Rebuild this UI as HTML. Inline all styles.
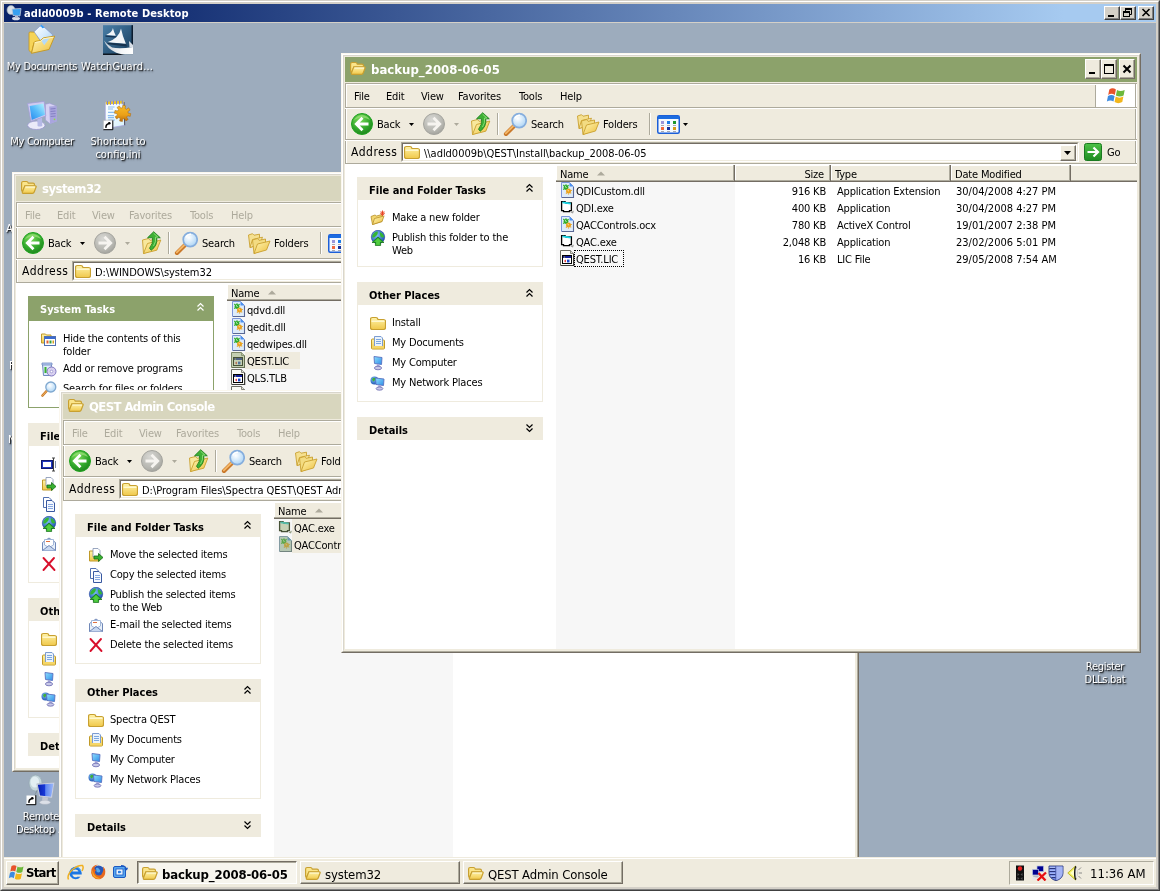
<!DOCTYPE html>
<html><head><meta charset="utf-8"><title>adld0009b - Remote Desktop</title>
<style>
html,body{margin:0;padding:0;background:#D4D0C8;}
body{width:1160px;height:891px;overflow:hidden;position:relative;font:11px "DejaVu Sans Condensed","Liberation Sans",sans-serif;color:#000;letter-spacing:-0.18px;}
*{box-sizing:border-box;}
.a{position:absolute;}
svg{display:block;overflow:visible;}
#rdp{position:absolute;left:0;top:0;width:1160px;height:891px;background:#D4D0C8;will-change:transform;}
#rdp .e1{position:absolute;left:0;top:0;right:0;bottom:0;border:1px solid;border-color:#D4D0C8 #404040 #404040 #D4D0C8;}
#rdp .e2{position:absolute;left:1px;top:1px;right:1px;bottom:1px;border:1px solid;border-color:#fff #808080 #808080 #fff;}
#otb{position:absolute;left:4px;top:4px;width:1152px;height:18px;background:linear-gradient(90deg,#0A246A 0%,#0A246A 8%,#A6CAF0 92%,#A6CAF0 100%);color:#fff;font-weight:bold;font-size:11px;line-height:19px;letter-spacing:0.09px;font-family:"DejaVu Sans Condensed","Liberation Sans",sans-serif;}
.ob{position:absolute;top:2px;width:16px;height:14px;background:#D4D0C8;border:1px solid;border-color:#fff #404040 #404040 #fff;box-shadow:inset -1px -1px 0 #808080;}
#desk{position:absolute;left:4px;top:23px;width:1152px;height:864px;overflow:hidden;background:#9DACBD;}
.dl{position:absolute;color:#fff;text-align:center;font-size:11px;line-height:13px;letter-spacing:-0.3px;text-shadow:1px 1px 1px rgba(0,0,0,0.85),1px 2px 2px rgba(0,0,0,0.45);white-space:nowrap;}
.win{position:absolute;width:800px;height:600px;background:#EFEBDE;border:1px solid;border-color:#FBF7EE #736D63 #736D63 #FBF7EE;overflow:hidden;}
.win .in{position:absolute;left:0;top:0;width:798px;height:598px;border:1px solid;border-color:#fff #ADAA9C #ADAA9C #fff;}
.win .in2{position:absolute;left:1px;top:1px;width:796px;height:596px;border:1px solid #D9D6CC;border-right-color:#EFEBDE;border-bottom-color:#EFEBDE;}
/* children positioned relative to .w0 which is at window (0,0) */
.w0{position:absolute;left:-1px;top:-1px;width:800px;height:600px;}
.tb{position:absolute;left:4px;top:4px;width:792px;height:25px;color:#fff;font-weight:bold;font-size:13px;line-height:25px;white-space:nowrap;}
.tb.act{background:#8CA26B;} .tb.ina{background:#D8D6BE;color:#fff;}
.tb span{position:absolute;left:26px;top:0;}
.cb{position:absolute;top:2px;width:16px;height:20px;background:#EFEBDE;border:1px solid;border-color:#fff #736D63 #736D63 #fff;box-shadow:inset -1px -1px 0 #ADAA9C;}
.hl{position:absolute;left:4px;width:792px;height:2px;border-top:1px solid #ADAA9C;border-bottom:1px solid #fff;}
.menu{position:absolute;left:4px;top:32px;width:792px;height:22px;line-height:22px;font-size:11px;white-space:nowrap;}
.menu span{position:absolute;top:1px;}
.ina-m span{color:#ADAA9C;}
.tool{position:absolute;left:4px;top:56px;width:792px;height:30px;line-height:30px;white-space:nowrap;}
.tool span{position:absolute;top:1px;}
.vsep{position:absolute;top:4px;width:2px;height:22px;border-left:1px solid #ADAA9C;border-right:1px solid #fff;}
.addr{position:absolute;left:4px;top:88px;width:792px;height:22px;line-height:22px;white-space:nowrap;}
.albl{position:absolute;left:6px;top:0px;font-size:12px;letter-spacing:0.5px;}
.abox{position:absolute;left:56px;top:1px;height:20px;background:#fff;border:1px solid;border-color:#ADAA9C #fff #fff #ADAA9C;}
.abox i{position:absolute;left:0;top:0;right:0;bottom:0;border:1px solid;border-color:#736D63 #EFEBDE #EFEBDE #736D63;}
.abox span{position:absolute;left:22px;top:1px;line-height:19px;letter-spacing:-0.03px}
.dd{position:absolute;right:2px;top:2px;width:16px;height:16px;background:#EFEBDE;border:1px solid;border-color:#fff #736D63 #736D63 #fff;box-shadow:inset -1px -1px 0 #ADAA9C;}
.cont{position:absolute;left:4px;top:111px;width:792px;height:485px;background:#fff;overflow:hidden;}
.th{position:absolute;left:12px;width:186px;height:23px;background:#EFEBDE;font-weight:bold;font-size:11px;line-height:28px;padding-left:12px;white-space:nowrap;letter-spacing:0px;overflow:hidden}
.th.pri{background:#8CA26B;color:#fff;height:25px;line-height:28px}
.tbody{position:absolute;left:12px;width:186px;border:1px solid #EFEBDE;border-top:none;background:#fff;}
.tbody.pri{border-color:#8CA26B;}
.ti{position:absolute;left:34px;white-space:nowrap;line-height:13px;}
.tic{position:absolute;left:12px;width:16px;height:16px;}
.chev{position:absolute;right:10px;top:7px;}
.lh{position:absolute;top:1px;height:17px;background:#EFEBDE;border-right:1px solid #736D63;border-bottom:1px solid #736D63;box-shadow:inset -1px -1px 0 #ADAA9C,inset 1px 1px 0 #fff;line-height:19px;padding-left:4px;white-space:nowrap;overflow:hidden}
.row{position:absolute;left:211px;height:17px;line-height:20px;white-space:nowrap;}
.row span{position:absolute;top:0;}
.row svg{position:absolute;left:6px;top:0px;}
.sorted{position:absolute;left:211px;top:18px;width:179px;bottom:0;background:#F7F7F7;}
#task{position:absolute;left:0;top:834px;width:1152px;height:30px;background:#EFEBDE;border-top:1px solid #EFEBDE;box-shadow:inset 0 1px 0 #fff;font-size:13px;z-index:50;}
.tkb{position:absolute;top:3px;height:23px;background:#EFEBDE;border:1px solid;border-color:#fff #736D63 #736D63 #fff;box-shadow:inset -1px -1px 0 #ADAA9C;line-height:20px;white-space:nowrap;}
.tkb.on{background:#F7F5EE;border-color:#736D63 #fff #fff #736D63;box-shadow:inset 1px 1px 0 #ADAA9C;font-weight:bold;}
.tkb span{position:absolute;left:24px;top:3px;letter-spacing:-0.15px}
.tkb svg{position:absolute;left:4px;top:3px;}
#tray{position:absolute;left:1005px;top:3px;width:145px;height:24px;border:1px solid;border-color:#ADAA9C #fff #fff #ADAA9C;}
</style></head><body>
<svg width="0" height="0" style="position:absolute;left:0;top:0"><defs>
<linearGradient id="gFold" x1="0" y1="0" x2="0" y2="1"><stop offset="0" stop-color="#FFF3A8"/><stop offset="1" stop-color="#F0C84A"/></linearGradient>
<linearGradient id="gFoldB" x1="0" y1="0" x2="1" y2="1"><stop offset="0" stop-color="#FFF7B8"/><stop offset="1" stop-color="#EDBE3C"/></linearGradient>
<radialGradient id="gBack" cx="0.4" cy="0.3" r="0.8"><stop offset="0" stop-color="#7CDB5A"/><stop offset="0.6" stop-color="#2FA52A"/><stop offset="1" stop-color="#1B7A1B"/></radialGradient>
<radialGradient id="gFwd" cx="0.4" cy="0.3" r="0.8"><stop offset="0" stop-color="#D8D8D4"/><stop offset="0.7" stop-color="#B4B4AE"/><stop offset="1" stop-color="#9A9A94"/></radialGradient>
<radialGradient id="gLens" cx="0.4" cy="0.35" r="0.7"><stop offset="0" stop-color="#FFFFFF"/><stop offset="1" stop-color="#A9D3F5"/></radialGradient>
<linearGradient id="gGo" x1="0" y1="0" x2="0" y2="1"><stop offset="0" stop-color="#4DC247"/><stop offset="1" stop-color="#1E8C22"/></linearGradient>
<linearGradient id="gMon" x1="0" y1="0" x2="1" y2="1"><stop offset="0" stop-color="#8FE0FF"/><stop offset="1" stop-color="#2E8CE6"/></linearGradient>
<linearGradient id="gWg" x1="0" y1="0" x2="1" y2="1"><stop offset="0" stop-color="#4A7FA8"/><stop offset="1" stop-color="#163C5C"/></linearGradient>
<radialGradient id="gGlobe" cx="0.4" cy="0.35" r="0.7"><stop offset="0" stop-color="#7EC0F5"/><stop offset="1" stop-color="#1A4FB0"/></radialGradient>

<linearGradient id="gPaper" x1="0" y1="0" x2="1" y2="1"><stop offset="0" stop-color="#FFFFFF"/><stop offset="0.5" stop-color="#D8ECFC"/><stop offset="1" stop-color="#9CCBF6"/></linearGradient>
<linearGradient id="gHull" x1="0" y1="0" x2="1" y2="0"><stop offset="0" stop-color="#C4CCD6"/><stop offset="0.6" stop-color="#F4F6F8"/><stop offset="1" stop-color="#FFFFFF"/></linearGradient>
<linearGradient id="gMon2" x1="1" y1="0" x2="0" y2="1"><stop offset="0" stop-color="#B8F6FF"/><stop offset="0.5" stop-color="#58BCFA"/><stop offset="1" stop-color="#2588EE"/></linearGradient>
<linearGradient id="gPage" x1="0" y1="0" x2="1" y2="1"><stop offset="0" stop-color="#FFFFFF"/><stop offset="1" stop-color="#D8F2FC"/></linearGradient>
<linearGradient id="gGear" x1="0" y1="0" x2="0" y2="1"><stop offset="0" stop-color="#F8BC28"/><stop offset="0.6" stop-color="#EBA018"/><stop offset="1" stop-color="#B86C10"/></linearGradient>
<linearGradient id="gRdp" x1="0" y1="0" x2="1" y2="0"><stop offset="0" stop-color="#0820B0"/><stop offset="0.45" stop-color="#1838D8"/><stop offset="0.5" stop-color="#5C84F0"/><stop offset="1" stop-color="#9CB8F8"/></linearGradient>
<filter id="tint" x="0" y="0" width="1" height="1" color-interpolation-filters="sRGB"><feFlood flood-color="#8CA26B" result="f"/><feComposite in="f" in2="SourceAlpha" operator="in" result="sil"/><feComposite in="SourceGraphic" in2="sil" operator="arithmetic" k1="0" k2="0.5" k3="0.5" k4="0"/></filter>
<symbol id="fold" viewBox="0 0 16 16"><path d="M0.5 4.500 Q0.5 2.500 2.500 2.500 H6 Q7.500 2.500 8 4.500 H13.500 Q15.500 4.500 15.500 6.500 V12.500 Q15.500 14.500 13.500 14.500 H2.500 Q0.500 14.500 0.500 12.500 Z" fill="url(#gFold)" stroke="#C8A030" stroke-width="1.2"/><path d="M1.500 6.200 H14.500" stroke="#FFFCE0" stroke-width="1.2"/></symbol>
<symbol id="foldo" viewBox="0 0 16 16"><path d="M0.600 4 Q0.600 2.500 2.100 2.500 H5.500 Q6.800 2.500 7.300 4.200 H12 Q13.500 4.200 13.500 5.800 V7 H4 L1.500 12.500 Q0.600 12.500 0.600 11 Z" fill="#FBE58A" stroke="#C8A030" stroke-width="1.2"/><path d="M3.800 6.800 H14.300 Q15.600 6.800 15 8.300 L13.200 13 Q12.700 14.400 11.300 14.400 H2.200 Q0.900 14.400 1.500 12.800 Z" fill="url(#gFold)" stroke="#C8A030" stroke-width="1.2"/><path d="M4.500 8 H14" stroke="#FFFCE0" stroke-width="1"/></symbol>

<symbol id="flag" viewBox="0 0 20 18"><path d="M3 3 Q6 1 9 3 L8 8 Q5 6 2 8 Z" fill="#E8532B"/><path d="M10 3.5 Q13 5.5 17 3.5 L16 8.5 Q12.5 10.5 9 8.5 Z" fill="#6DB83A"/><path d="M1.8 9 Q5 7 7.8 9 L6.8 14 Q4 12 0.8 14 Z" fill="#3D8BE0"/><path d="M8.8 9.5 Q12 11.5 15.8 9.5 L14.8 14.5 Q11 16.5 7.8 14.5 Z" fill="#F2B61C"/></symbol>

<symbol id="back" viewBox="0 0 24 24"><circle cx="12" cy="12" r="10.500" fill="url(#gBack)" stroke="#1FA31F" stroke-width="1"/><path d="M3.500 9 Q6 3.500 12 3 Q18 3.500 20 8 Q16 5.500 12 5.500 Q7 5.500 3.500 9 Z" fill="#9BE37A" opacity="0.7"/><path d="M18.500 12 H7 M12.500 5.800 L6.300 12 L12.500 18.200" fill="none" stroke="#fff" stroke-width="2.800" stroke-linejoin="miter"/></symbol>
<symbol id="fwd" viewBox="0 0 24 24"><circle cx="12" cy="12" r="10.500" fill="url(#gFwd)" stroke="#A4A49E" stroke-width="1"/><path d="M5.500 12 H17 M11.500 5.800 L17.700 12 L11.500 18.200" fill="none" stroke="#F6F4F0" stroke-width="2.800" stroke-linejoin="miter"/></symbol>
<symbol id="up" viewBox="0 0 22 24"><path d="M2.500 9 L8.500 7.500 L10 9.300 L16.500 8 V17.500 L3.500 22.500 Z" fill="#F8E89C" stroke="#C9A030" stroke-width="0.9"/><path d="M3.500 22.500 L7.500 12.500 L20.800 9 L16.800 19.200 Z" fill="url(#gFoldB)" stroke="#C9A030" stroke-width="0.9"/><path d="M13.700 0.700 L20.300 6.800 H16.800 Q17.800 14.500 11.200 19.300 L9.500 17.200 Q13.200 13 12.600 6.800 H7.500 Z" fill="#3DB034" stroke="#157A18" stroke-width="0.8"/><path d="M13.700 2.300 L17.800 6 H15.600 Q16.200 11 13.500 15" fill="none" stroke="#8FE07A" stroke-width="0.9"/></symbol>
<symbol id="search" viewBox="0 0 24 24"><path d="M3 22 L10.800 14.300" stroke="#C9782A" stroke-width="4.200" stroke-linecap="round"/><path d="M2.800 21.400 L10.300 14" stroke="#F5B868" stroke-width="1.800" stroke-linecap="round"/><circle cx="16.200" cy="8.600" r="7" fill="url(#gLens)" stroke="#86AEDD" stroke-width="1.700"/><path d="M11.800 6.500 Q13.500 3.300 17 3.200" stroke="#fff" stroke-width="1.300" fill="none"/></symbol>
<symbol id="folders" viewBox="0 0 24 22"><path d="M1.500 3 L5.500 1.700 L7 3.200 L12.500 2.200 V12 L3 15.500 Z" fill="#F5E090" stroke="#C9A030" stroke-width="0.9"/><path d="M3 15.500 L5.500 7.500 L15.500 5.200 L12.500 12.500 Z" fill="#FBEBA8" stroke="#C9A030" stroke-width="0.9"/><path d="M5.500 8 L10.500 6.500 L12 8.300 L18.500 7 V17 L7 21.500 Z" fill="#F3DC82" stroke="#C9A030" stroke-width="0.9"/><path d="M7 21.500 L10.500 12 L23 9 L19.500 18 Z" fill="url(#gFoldB)" stroke="#C9A030" stroke-width="0.9"/></symbol>
<symbol id="views" viewBox="0 0 23 19"><rect x="0.750" y="0.750" width="21.500" height="17.500" rx="1.500" fill="#F4F9FF" stroke="#1C5FD8" stroke-width="1.500"/><rect x="1" y="1" width="21" height="3" fill="#1C6CE0"/><rect x="4" y="6" width="3" height="3" fill="#9A96D8"/><rect x="10" y="6" width="3" height="3" fill="#1C7CE8"/><rect x="16" y="6" width="3" height="3" fill="#1E962C"/><rect x="4" y="12" width="3" height="3" fill="#F0683C"/><rect x="10" y="12" width="3" height="3" fill="#14309A"/><rect x="16" y="12" width="3" height="3" fill="#D69A18"/><path d="M4 10.500 H7 M10 10.500 H13 M16 10.500 H19 M4 16.500 H7 M10 16.500 H13 M16 16.500 H19" stroke="#A8A8B0"/></symbol>
<symbol id="go" viewBox="0 0 18 18"><rect x="0.5" y="0.5" width="17" height="17" rx="2" fill="url(#gGo)" stroke="#1A7A20"/><path d="M3.5 9 H13 M9.5 4.5 L14 9 L9.5 13.5" fill="none" stroke="#fff" stroke-width="2.2"/></symbol>

<symbol id="dll" viewBox="0 0 16 16"><path d="M1.500 0.500 H9.500 L13.500 4.500 V15.500 H1.500 Z" fill="#DDEBFB" stroke="#7A94D8"/><path d="M13.500 5 V15.500 H2" fill="none" stroke="#5A6894" stroke-width="1.100"/><path d="M9.500 0.500 V4.500 H13.500 Z" fill="#4A90F0"/><circle cx="6" cy="5.500" r="2.400" fill="#2EAD2A"/><path d="M3.300 3 L4.300 4 M8.600 3.200 L7.700 4.100 M6 2.200 V3.200 M3.200 7.600 L4.200 6.800" stroke="#2EAD2A" stroke-width="1.100"/><path d="M5 4.500 L6.500 5.500" stroke="#E8F4E0" stroke-width="1"/><circle cx="8.500" cy="9" r="2.500" fill="#EBA21E"/><path d="M11.200 11.400 L10.400 10.700 M5.900 11.500 L6.700 10.800 M8.500 12.500 V11.500 M11.800 8.500 H10.800" stroke="#EBA21E" stroke-width="1.100"/><path d="M7.500 8 L9 9.200" stroke="#FBE8B0" stroke-width="0.900"/></symbol>
<symbol id="exe" viewBox="0 0 16 16"><path d="M1.600 2.600 H5 L6 4 H11.400 V11.600 H9.500 V12.600 H3.500 V11.600 H1.600 Z" fill="#fff" stroke="#000" stroke-width="1.300"/><path d="M2.500 3.400 L10.800 4.600" stroke="#18D8E8" stroke-width="1.700"/><path d="M10.500 13.500 L14 11.500 L13 14.500 Z" fill="#9C9C9C"/></symbol>
<symbol id="lic" viewBox="0 0 16 16"><path d="M0.500 0.500 H10.500 L13.500 3.500 V15.500 H0.500 Z" fill="#FBFBF6" stroke="#6C6C64"/><path d="M13.700 4 V15.700 H1" fill="none" stroke="#303030" stroke-width="1.100"/><path d="M10.500 0.500 V3.500 H13.500" fill="#E0E0D8" stroke="#6C6C64" stroke-width="0.800"/><rect x="2.500" y="5.500" width="9" height="8" fill="#fff" stroke="#000"/><rect x="3" y="6" width="8" height="2" fill="#14209A"/><path d="M4 11 L5.800 9.600 V12.400 Z" fill="#E01818"/><path d="M7 9.600 H9.500 V12.400 H7 Z" fill="#1848D0"/><circle cx="4.500" cy="7" r="0.600" fill="#F0E020"/></symbol>

<symbol id="newfold" viewBox="0 0 16 16"><path d="M1 6.5 L5 5 L6.5 6 L12 4.5 V11.5 L2.5 14.5 Z" fill="#F2D670" stroke="#B8902A" stroke-width="0.8"/><path d="M2.5 14.5 L4.5 8.5 L14 6 L12 11.5 Z" fill="url(#gFoldB)" stroke="#B8902A" stroke-width="0.8"/><path d="M12.5 0.5 V6 M10 3.2 H15 M10.8 1.3 L14.2 5.2 M14.2 1.3 L10.8 5.2" stroke="#E8401C" stroke-width="0.9"/></symbol>
<symbol id="globe" viewBox="0 0 16 16"><circle cx="8" cy="7" r="6.700" fill="url(#gGlobe)" stroke="#1C3C9A" stroke-width="0.600"/><path d="M2.500 5 Q4 1.800 7.500 1.200 Q8.500 4 6 6 Q4.500 8 2.200 7.500 Z M10 2 Q13 3 14.300 6.500 Q12.500 8.500 10.500 6.500 Q9.500 4 10 2 Z" fill="#35B535"/><path d="M8 7 L14 12.500 H10.600 V15.600 H5.400 V12.500 H2 Z" fill="#2FB026" stroke="#0E6A12" stroke-width="0.700"/><path d="M8 8.300 L11.600 11.700 H9.800 V14.800 H6.200 V11.700 H4.400 Z" fill="#52CC40"/></symbol>
<symbol id="mydocs" viewBox="0 0 16 16"><path d="M1.5 5 Q1.5 4 2.5 4 H5 L6 5 H13.5 Q14.5 5 14.5 6 V13 Q14.5 14 13.5 14 H2.5 Q1.5 14 1.5 13 Z" fill="url(#gFold)" stroke="#C09A28"/><path d="M4.5 1.5 H11 L12.5 3 V11.5 H4.5 Z" fill="#EAF3FC" stroke="#7C9CD0"/><path d="M6 4.5 H11 M6 6.5 H11 M6 8.5 H11" stroke="#7CA8E0"/><path d="M2 11 H14 V13.5 H2 Z" fill="#F5D668"/></symbol>
<symbol id="mycomp" viewBox="0 0 16 16"><path d="M4 1.5 L12 2.5 L11.5 9.5 L4.5 8.5 Z" fill="url(#gMon)" stroke="#5870C0" stroke-width="0.9"/><path d="M7 9 L9.5 9.3 L9.8 12 L6.5 11.5 Z" fill="#A8A8D8"/><ellipse cx="8" cy="13" rx="3.6" ry="1.8" fill="#C8C8E8" stroke="#6868B0" stroke-width="0.8"/></symbol>
<symbol id="netpl" viewBox="0 0 16 16"><circle cx="4.5" cy="5.5" r="4" fill="url(#gGlobe)"/><path d="M2 4 Q4 2 5.5 3.5 Q5 6 3 6.5 Z" fill="#3FAF3A"/><path d="M5.5 3 L14 4 L13.5 10.5 L6 9.5 Z" fill="url(#gMon)" stroke="#5870C0" stroke-width="0.9"/><path d="M8.5 10 L11 10.3 L11.3 12.5 L8 12 Z" fill="#A8A8D8"/><ellipse cx="9.5" cy="13.6" rx="3.4" ry="1.6" fill="#C8C8E8" stroke="#6868B0" stroke-width="0.8"/></symbol>
<symbol id="move" viewBox="0 0 16 16"><path d="M1.5 4 H5.5 L6.5 5 H11.5 V14 H1.5 Z" fill="url(#gFold)" stroke="#C09A28"/><path d="M5 1.5 H10 L12 3.5 V10 H5 Z" fill="#fff" stroke="#8090B0" stroke-width="0.8"/><path d="M6 9 H10.5 V6.5 L15 10.5 L10.5 14.5 V12 H6 Z" fill="#38B030" stroke="#146A14" stroke-width="0.8"/></symbol>
<symbol id="copy" viewBox="0 0 16 16"><path d="M2.5 1.5 H8 L10.5 4 V11.5 H2.5 Z" fill="#fff" stroke="#5070B0"/><path d="M5.5 4.5 H11 L13.5 7 V15.5 H5.5 Z" fill="#F4F8FF" stroke="#3858A0"/><path d="M7 8.5 H12 M7 10.5 H12 M7 12.5 H12" stroke="#88A8E0"/></symbol>
<symbol id="email" viewBox="0 0 16 16"><path d="M1.5 6.5 L8 2 L14.5 6.5 V14.5 H1.5 Z" fill="#E8F0FA" stroke="#7088B8"/><path d="M3.5 3.5 H12.5 V9 L8 11.5 L3.5 9 Z" fill="#fff" stroke="#90A8D0" stroke-width="0.8"/><path d="M1.5 14.5 L8 9.5 L14.5 14.5" fill="#C8D8F0" stroke="#7088B8"/><path d="M5 5.5 H9" stroke="#E07040"/></symbol>
<symbol id="del" viewBox="0 0 16 16"><path d="M2.500 2 L13.500 14 M13 2 L2.500 14" stroke="#D8102C" stroke-width="1.900" stroke-linecap="round"/></symbol>
<symbol id="hidec" viewBox="0 0 16 16"><path d="M0.5 3 H4.5 L5.5 4 H10 V12 H0.5 Z" fill="url(#gFold)" stroke="#C09A28"/><rect x="3.5" y="5.5" width="11" height="9" fill="#fff" stroke="#5070B0"/><rect x="4" y="6" width="10" height="2" fill="#3A6AD0"/><rect x="5.5" y="9.5" width="2" height="3" fill="#E06030"/><rect x="8.5" y="9.5" width="2" height="3" fill="#30A040"/><rect x="11.5" y="9.5" width="1.5" height="3" fill="#D8A020"/></symbol>
<symbol id="addrem" viewBox="0 0 16 16"><path d="M1.5 3.5 H10.5 L9.5 14.5 H2.5 Z" fill="#DCEBFA" stroke="#7088C0"/><path d="M1 2 H11 V4 H1 Z" fill="#B8CCF0" stroke="#7088C0" stroke-width="0.8"/><circle cx="10.5" cy="10.5" r="4.5" fill="#D8D0F0" stroke="#8078C0"/><circle cx="10.5" cy="10.5" r="1.3" fill="#fff" stroke="#8078C0" stroke-width="0.6"/><rect x="3.5" y="6" width="2" height="6" fill="#38B030"/></symbol>
<symbol id="search16" viewBox="0 0 16 16"><path d="M1.5 14.5 L6.5 9" stroke="#C87A28" stroke-width="2.6" stroke-linecap="round"/><path d="M1.5 14.5 L6.5 9" stroke="#F0B060" stroke-width="1" stroke-linecap="round"/><circle cx="9.8" cy="6" r="5" fill="url(#gLens)" stroke="#7FA8D0" stroke-width="1.3"/></symbol>
<symbol id="rename" viewBox="0 0 16 16"><rect x="0.5" y="4.5" width="11" height="8" fill="#2038C0" stroke="#101870"/><rect x="2" y="6" width="8" height="5" fill="#fff"/><path d="M12.5 2 V15 M11 2 H14 M11 15 H14" stroke="#404040"/><path d="M14.5 5 V12" stroke="#8090B0"/></symbol>

<symbol id="d_mydocs" viewBox="0 0 32 32"><path d="M3 9 Q3 8 4.200 8 L9 8.200 L14.500 17 L8 18.500 L5.500 28.800 L3 26.500 Z" fill="#F6D458" stroke="#C4961C" stroke-width="0.800"/><path d="M15.400 0.800 L26.900 10.900 L18.200 22 L8.100 7.700 Z" fill="url(#gPaper)" stroke="#7894D0" stroke-width="0.600"/><path d="M13.800 2.200 L15.400 0.800 L18.700 3.600 L16.300 4.300 L15.300 2.700 Z" fill="#349AF2"/><path d="M5.500 29.300 L8.100 18.500 Q8.500 17.500 10 17.300 L14.200 16.600 L17.500 13.800 L28.700 12.100 L23 25.500 Z" fill="url(#gFoldB)" stroke="#C4961C" stroke-width="0.900"/><path d="M15 16.300 L18.200 21.300 L23.700 14.100 L17.800 14.700 Z" fill="#B4DAFA"/><path d="M8.800 18.600 L14.400 17.500 L17.800 14.700 L27.500 13.200" fill="none" stroke="#FFF6C8" stroke-width="0.900"/></symbol>
<symbol id="d_wg" viewBox="0 0 32 32"><rect x="1" y="1.200" width="30" height="29.700" fill="url(#gWg)"/><path d="M29.500 1.200 H31 V23 H29.500 Z" fill="#0C1C2E"/><path d="M1 29.500 H19 L22 30.900 H1 Z" fill="#0E1620"/><path d="M10.900 4.100 Q10.300 8.800 4.100 10.900 L13.800 11.700 Q11.800 8 10.900 4.100 Z" fill="#F2F5F8"/><path d="M3.300 11.500 L14.200 12.300 L14.500 13.700 L3.500 12.700 Z" fill="#143456"/><path d="M19 4.500 Q17 14.500 5.300 18.200 L23.900 19.800 Q20.500 12 19 4.500 Z" fill="#F2F5F8"/><path d="M5.300 18.600 L24.200 20.200 L24.900 22.400 L6 20.200 Z" fill="#16324E"/><path d="M2 16.600 Q5 21 10.100 23.400 Q17 25.200 31 23 V30.500 Q20 31 14.200 28.700 Q5 25 2 16.600 Z" fill="url(#gHull)"/><path d="M27 17 L31 21 V23 L27.500 23.500 Z" fill="#D8DEE6"/></symbol>
<symbol id="d_mycomp" viewBox="0 0 32 32"><path d="M19.400 5.300 L23.500 4.200 L30.300 6.900 L30.700 22.200 L24 24.700 L19.400 21 Z" fill="#D6D2F3" stroke="#9C98D4" stroke-width="0.600"/><path d="M23.200 7.500 L30.300 6.900 L30.700 22.200 L24 24.700 Z" fill="#A9A5DE"/><path d="M24.500 10 L29.500 9.500 M24.500 12.500 L29.500 12 M24.600 15 L29.600 14.500 M24.600 17.500 L29.600 17" stroke="#8480C4" stroke-width="1.100"/><circle cx="28.500" cy="20.400" r="0.800" fill="#8CE040"/><ellipse cx="10.300" cy="26.300" rx="8.700" ry="4.200" fill="#EAEAF9" stroke="#9490CC" stroke-width="0.700"/><path d="M11.300 19.800 L16 18.600 L16.300 27 Q13.500 28 11.600 27 Z" fill="#B5B9E6"/><path d="M1.600 4.500 L18.200 2.400 L19.800 17 L4.900 22.200 Z" fill="#CFCBF0" stroke="#A09CD8" stroke-width="0.700"/><path d="M3.700 6.900 L17.400 4.500 L19 15.800 L5.700 21 Z" fill="url(#gMon2)"/></symbol>
<symbol id="d_cfg" viewBox="0 0 32 32"><path d="M3.300 3.300 L21.800 2.400 L22.600 26.300 L11.300 28.300 L3.300 28.300 Z" fill="url(#gPage)" stroke="#A8A4E0" stroke-width="0.700"/><path d="M22 3 L22.700 26.300" stroke="#50505E" stroke-width="1"/><path d="M3.800 2.800 L21.500 1.800 L21.600 4.600 L3.800 5.500 Z" fill="#E8C428"/><path d="M5.500 2 V6 M8.500 1.900 V5.900 M11.500 1.800 V5.800 M14.500 1.700 V5.700 M17.500 1.600 V5.600 M20.300 1.500 V5.400" stroke="#7C84D8" stroke-width="1"/><path d="M6 8 H12.500 M6 10 H11 M6 13.400 H12.500 M5.800 16.600 H12 M6 18.600 H12 M6.200 21 H13" stroke="#8CBCF0" stroke-width="1.100"/><path d="M28.8 14.6 L28.2 17.4 L25.7 16.8 L24.7 18.2 L26.2 20.4 L23.9 21.9 L22.5 19.7 L20.8 20.0 L20.4 22.6 L17.6 22.0 L18.2 19.5 L16.8 18.5 L14.6 20.0 L13.1 17.7 L15.3 16.3 L15.0 14.6 L12.4 14.2 L13.0 11.4 L15.5 12.0 L16.5 10.6 L15.0 8.4 L17.3 6.9 L18.7 9.1 L20.4 8.8 L20.8 6.2 L23.6 6.8 L23.0 9.3 L24.4 10.3 L26.6 8.8 L28.1 11.1 L25.9 12.5 L26.2 14.2 Z" fill="url(#gGear)" stroke="#A86410" stroke-width="0.500"/><rect x="1.500" y="21.500" width="9" height="9" fill="#fff"/><path d="M1.200 30.700 H10.800 V21.200" fill="none" stroke="#000" stroke-width="1"/><path d="M1.200 30.700 V21.200 H10.800" fill="none" stroke="#B0B0B0" stroke-width="0.600"/><path d="M4 28.800 Q3.600 25.300 7 24.600" stroke="#000" stroke-width="1.500" fill="none"/><circle cx="7.300" cy="24.300" r="1.300" fill="#000"/></symbol>
<symbol id="d_rdp" viewBox="0 0 32 32"><ellipse cx="9.500" cy="9" rx="6.500" ry="8" fill="#C4D6DC" stroke="#94A8B0" stroke-width="0.700"/><ellipse cx="8.800" cy="8" rx="4.300" ry="5.500" fill="#E2EEF2"/><path d="M11 16.500 L8.500 22" stroke="#7C8C94" stroke-width="0.800"/><path d="M10.800 9.800 L28.500 8.500 L26 24 L13 22.500 Z" fill="#D8DCE6" stroke="#A0A8B8" stroke-width="0.500"/><path d="M11.800 10.700 L27.500 9.500 L25.200 22.800 L14 21.600 Z" fill="url(#gRdp)"/><path d="M16.500 23 L22 23.500 L21.500 27 L16 26.800 Z" fill="#C4C8D2"/><ellipse cx="19" cy="28.300" rx="5.500" ry="2" fill="#DCE0E8" stroke="#B0B4C0" stroke-width="0.400"/><rect x="0.500" y="21.500" width="9" height="9" fill="#fff"/><path d="M0.200 30.700 H9.800 V21.200" fill="none" stroke="#000" stroke-width="1"/><path d="M3 28.800 Q2.600 25.300 6 24.600" stroke="#000" stroke-width="1.500" fill="none"/><circle cx="6.300" cy="24.300" r="1.300" fill="#000"/></symbol>

<symbol id="sflag" viewBox="0 0 18 18"><path d="M4.500 3 Q7 1.300 9.500 3 L8.300 8.500 Q5.800 7 3.300 8.500 Z" fill="#E8532B"/><path d="M10.500 3.500 Q13 5.200 16.500 3.500 L15.300 9 Q12.300 10.700 9.300 9 Z" fill="#6DB83A"/><path d="M3 9.700 Q5.800 8 8 9.700 L6.800 15.200 Q4.500 13.500 1.800 15.200 Z" fill="#3D8BE0"/><path d="M9 10.200 Q12 11.900 15 10.200 L13.800 15.700 Q10.800 17.400 7.800 15.700 Z" fill="#F2B61C"/></symbol>
<symbol id="ie" viewBox="0 0 17 17"><path d="M14.700 9.300 A6.200 6.200 0 1 0 13.500 12.700 H10.300 A3.300 3.300 0 0 1 5.300 10.500 H14.700 Z M5.300 7.600 A3.300 3.300 0 0 1 11.500 7.600 Z" fill="#1C76E4"/><path d="M8.500 3 A6 6 0 0 1 14 7" fill="none" stroke="#58B0F8" stroke-width="1"/><path d="M1.500 15.500 Q-0.500 11 5.500 5.500 Q11 0.800 15.500 1.500 Q17 3.500 15 7" fill="none" stroke="#F0B020" stroke-width="1.500"/></symbol>
<symbol id="ff" viewBox="0 0 16 16"><circle cx="8.500" cy="7.500" r="6" fill="#2858B8"/><path d="M6 4 Q8 3 9 5 Q11 6 10 8 Q8 9 6.500 7.500 Z" fill="#58A8E8"/><path d="M8 0.800 Q3 1 1.500 5 Q0.300 9 2.500 12.500 Q5.500 16 10.500 15 Q15.500 13 15.300 7.500 Q15 4 13 2.500 Q14 6 12.500 8.500 Q12 11 9 11.500 Q6 11.500 5 9 Q4.500 7.500 6 6 Q4 5.500 4.500 3.500 Q6 1.500 8 0.800 Z" fill="#E8681C"/><path d="M2.500 6 Q1.500 10 4 13 Q7 15.500 10.500 14.500 Q6.500 14 4.500 11 Q3 8.500 2.500 6 Z" fill="#F8A820"/></symbol>
<symbol id="ql3" viewBox="0 0 16 16"><rect x="1.500" y="2.500" width="12" height="11" rx="1.500" fill="#58A8F0" stroke="#1C58C0"/><rect x="4" y="5" width="7" height="6" fill="#E8F4FF" stroke="#1C58C0" stroke-width="0.800"/><path d="M9 1.500 Q14 1.500 14.500 6 M14.500 6 L12.500 4.500 M14.500 6 L15.500 3.800" stroke="#1C58C0" fill="none" stroke-width="1.100"/><path d="M6 7 Q8 6 9.500 8 Q8 10 6 9 Z" fill="#2C7BE0"/></symbol>
<symbol id="tr1" viewBox="0 0 16 16"><rect x="4" y="0.500" width="8" height="15" fill="#101010"/><circle cx="8" cy="3.500" r="2.200" fill="#E82020"/><path d="M5.500 8 L7.500 9.500 L5.500 11 Z M10.500 8 L8.500 9.500 L10.500 11 Z M5.500 12 L7.500 13.500 L5.500 15 Z M10.500 12 L8.500 13.500 L10.500 15 Z" fill="#505050"/></symbol>
<symbol id="tr2" viewBox="0 0 16 16"><rect x="6" y="1" width="6.500" height="5.500" fill="#000090" stroke="#B8C4E0" stroke-width="0.700"/><rect x="1.500" y="4.500" width="6" height="5.500" fill="#000090" stroke="#B8C4E0" stroke-width="0.700"/><path d="M2 10.500 H8 L7 12.500 H2.500 Z" fill="#B4B8C8"/><ellipse cx="3" cy="13.500" rx="2" ry="1.500" fill="#E4E4EC"/><path d="M7.500 8 L14.500 15.500 M15 7.500 L6.500 15.500" stroke="#E81010" stroke-width="2.300"/></symbol>
<symbol id="tr3" viewBox="0 0 16 16"><path d="M1 1 H15 V8 Q15 13.500 8 15.800 Q1 13.500 1 8 Z" fill="#6C84E4" stroke="#303C78" stroke-width="0.900"/><path d="M8 1.400 H14.600 V8 Q14.600 13 8 15.300 Z" fill="#A4B4F4"/><path d="M1.500 3.500 H7.500 M1.500 6.500 H7.500 M1.800 9.500 H7.500 M3.500 12.500 H7.500" stroke="#28347C" stroke-width="1.200"/><path d="M1.500 2.300 H7.500 M1.500 5.200 H7.500 M1.600 8.200 H7.500 M2.600 11.200 H7.500" stroke="#B8C8FC" stroke-width="1"/><path d="M7.800 1.400 V15.300" stroke="#3C4890" stroke-width="0.700"/></symbol>
<symbol id="tr4" viewBox="0 0 16 16"><path d="M0.800 8 L8.500 1 V15 Z" fill="#F4F060" stroke="#A8A400" stroke-width="0.700"/><path d="M3 8 L8 3.500 V12.500 Z" fill="#FFFFC8"/><ellipse cx="8.600" cy="8" rx="1.600" ry="7" fill="#101010"/><ellipse cx="9.300" cy="8" rx="0.900" ry="6" fill="#E8E8E8"/><path d="M11.500 5 L14 2.500 M11.800 8 H15 M11.500 11 L14 13.500" stroke="#808080" stroke-width="0.900"/></symbol>
<symbol id="rdpi" viewBox="0 0 16 16"><ellipse cx="5" cy="5" rx="4" ry="4.500" fill="#D8E0E8" stroke="#A0A8B0" stroke-width="0.600"/><path d="M6 4 L15 3.500 L14 11 L7 10.500 Z" fill="#38A0F0" stroke="#C0C8D8" stroke-width="0.800"/><ellipse cx="10" cy="13.500" rx="4" ry="1.800" fill="#D8DCE8"/><path d="M9 11 H12 V13 H9 Z" fill="#B8BCD0"/></symbol>
</defs></svg>

<div id="rdp"><div class="e1"></div><div class="e2"></div>
<div id="otb"><svg class="a" style="left:2px;top:1px" width="16" height="16" viewBox="0 0 16 16" ><use href="#rdpi"/></svg><span class="a" style="left:20px;top:0;white-space:nowrap">adld0009b - Remote Desktop</span>
<div class="ob" style="left:1100px"><svg class="a" style="left:3px;top:8px" width="6" height="2"><rect width="6" height="2" fill="#000"/></svg></div>
<div class="ob" style="left:1116px"><svg class="a" style="left:2px;top:1px" width="10" height="10" viewBox="0 0 10 10"><path d="M2.5 3 V0.5 H8.5 V6.5 H6" fill="none" stroke="#000"/><rect x="2" y="0" width="7" height="2" fill="#000"/><rect x="0.5" y="3.5" width="6" height="5" fill="none" stroke="#000"/><rect x="0" y="3" width="7" height="2" fill="#000"/></svg></div>
<div class="ob" style="left:1134px"><svg class="a" style="left:3px;top:2px" width="8" height="7" viewBox="0 0 8 7"><path d="M0.5 0 L7.5 7 M7.5 0 L0.5 7" stroke="#000" stroke-width="1.6"/></svg></div>
</div>
<div id="desk"><svg class="a" style="left:22px;top:1px" width="32" height="32" viewBox="0 0 32 32" ><use href="#d_mydocs"/></svg><div class="dl" style="left:-22px;width:120px;top:37px;letter-spacing:-0.3px">My Documents</div><svg class="a" style="left:98px;top:1px" width="32" height="32" viewBox="0 0 32 32" ><use href="#d_wg"/></svg><div class="dl" style="left:53px;width:120px;top:37px;letter-spacing:0.12px">WatchGuard...</div><svg class="a" style="left:22px;top:76px" width="32" height="32" viewBox="0 0 32 32" ><use href="#d_mycomp"/></svg><div class="dl" style="left:-22px;width:120px;top:112px;letter-spacing:-0.3px">My Computer</div><svg class="a" style="left:98px;top:76px" width="32" height="32" viewBox="0 0 32 32" ><use href="#d_cfg"/></svg><div class="dl" style="left:54px;width:120px;top:112px;letter-spacing:0px">Shortcut to<br>config.ini</div><svg class="a" style="left:22px;top:751px" width="32" height="32" viewBox="0 0 32 32" ><use href="#d_rdp"/></svg><div class="dl" style="left:-23px;width:120px;top:787px;letter-spacing:-0.3px">Remote<br>Desktop ...</div><div class="dl" style="left:1041px;width:120px;top:637px">Register<br>DLLs.bat</div><div class="dl" style="left:2px;top:199px;width:8px;text-align:left">A</div><div class="dl" style="left:5px;top:336px;width:8px;text-align:left">F</div><div class="dl" style="left:4px;top:410px;width:8px;text-align:left">N</div><div class="win" style="left:8px;top:149px;z-index:1"><div class="in"></div><div class="in2"></div><div class="w0"><div class="tb ina"><svg class="a" style="left:5px;top:3px" width="16" height="16" viewBox="0 0 16 16" ><use href="#foldo"/></svg><span style="letter-spacing:-0.55px">system32</span><div class="cb" style="left:740px"><svg class="a" style="left:3px;top:12px" width="6" height="2"><rect width="6" height="2" fill="#000"/></svg></div><div class="cb" style="left:756px"><svg class="a" style="left:2px;top:4px" width="10" height="10"><rect x="0.5" y="1" width="9" height="8.5" fill="none" stroke="#000"/><rect x="0" y="0" width="10" height="2" fill="#000"/></svg></div><div class="cb" style="left:774px"><svg class="a" style="left:3px;top:5px" width="8" height="8" viewBox="0 0 8 8"><path d="M0.5 0.5 L7.5 7.5 M7.5 0.5 L0.5 7.5" stroke="#000" stroke-width="2"/></svg></div></div><div class="hl" style="top:30px"></div><div class="a" style="left:4px;top:31px;width:2px;height:79px;border-left:1px solid #ADAA9C;border-right:1px solid #fff"></div><div class="a" style="left:794px;top:31px;width:2px;height:79px;border-left:1px solid #ADAA9C;border-right:1px solid #fff"></div><div class="menu ina-m"><span style="left:9px">File</span><span style="left:41px">Edit</span><span style="left:76px">View</span><span style="left:113px">Favorites</span><span style="left:174px">Tools</span><span style="left:215px">Help</span><div class="a" style="left:750px;top:0;width:2px;height:22px;border-left:1px solid #ADAA9C;border-right:1px solid #fff"></div><div class="a" style="left:752px;top:0;width:38px;height:22px;background:#fff"><svg class="a" style="left:9px;top:1px" width="22" height="20" viewBox="0 0 22 20" ><use href="#flag"/></svg></div></div><div class="hl" style="top:54px"></div><div class="tool"><svg class="a" style="left:5px;top:3px" width="24" height="24" viewBox="0 0 24 24" ><use href="#back"/></svg><span style="left:32px">Back</span><svg class="a" style="left:64px;top:14px" width="5" height="3"><path d="M0 0 H5 L2.5 3 Z" fill="#000"/></svg><svg class="a" style="left:77px;top:3px" width="24" height="24" viewBox="0 0 24 24" ><use href="#fwd"/></svg><svg class="a" style="left:109px;top:14px" width="5" height="3"><path d="M0 0 H5 L2.5 3 Z" fill="#ADAA9C"/></svg><svg class="a" style="left:124px;top:3px" width="22" height="24" viewBox="0 0 22 24" ><use href="#up"/></svg><div class="vsep" style="left:152px"></div><svg class="a" style="left:158px;top:3px" width="24" height="24" viewBox="0 0 24 24" ><use href="#search"/></svg><span style="left:186px">Search</span><svg class="a" style="left:231px;top:4px" width="24" height="22" viewBox="0 0 24 22" ><use href="#folders"/></svg><span style="left:258px">Folders</span><div class="vsep" style="left:304px"></div><svg class="a" style="left:312px;top:6px" width="23" height="19" viewBox="0 0 23 19" ><use href="#views"/></svg><svg class="a" style="left:338px;top:14px" width="5" height="3"><path d="M0 0 H5 L2.5 3 Z" fill="#000"/></svg></div><div class="hl" style="top:86px"></div><div class="addr"><span class="albl">Address</span><div class="abox" style="width:678px"><i></i><svg class="a" style="left:2px;top:1px" width="16" height="16" viewBox="0 0 16 16" ><use href="#fold"/></svg><span>D:\WINDOWS\system32</span><div class="dd"><svg class="a" style="left:3px;top:5px" width="7" height="4"><path d="M0 0 H7 L3.5 4 Z" fill="#000"/></svg></div></div><svg class="a" style="left:739px;top:2px" width="18" height="18" viewBox="0 0 18 18" ><use href="#go"/></svg><span class="a" style="left:762px;top:1px">Go</span></div><div class="a" style="left:4px;top:110px;width:792px;height:1px;background:#ADAA9C"></div><div class="cont"><div class="th pri" style="top:13px">System Tasks<svg class="chev" width="7" height="8" viewBox="0 0 7 8"><path d="M0.5 3.5 L3.5 0.5 L6.5 3.5 M0.5 7.5 L3.5 4.5 L6.5 7.5" fill="none" stroke="#fff" stroke-width="1.2"/></svg></div><div class="tbody pri" style="top:38px;height:87px"><svg class="tic" style="top:10px" width="16" height="16" viewBox="0 0 16 16"><use href="#hidec"/></svg><div class="ti" style="top:11px">Hide the contents of this<br>folder</div><svg class="tic" style="top:40px" width="16" height="16" viewBox="0 0 16 16"><use href="#addrem"/></svg><div class="ti" style="top:41px">Add or remove programs</div><svg class="tic" style="top:60px" width="16" height="16" viewBox="0 0 16 16"><use href="#search16"/></svg><div class="ti" style="top:61px">Search for files or folders</div></div><div class="th" style="top:140px">File and Folder Tasks<svg class="chev" width="7" height="8" viewBox="0 0 7 8"><path d="M0.5 3.5 L3.5 0.5 L6.5 3.5 M0.5 7.5 L3.5 4.5 L6.5 7.5" fill="none" stroke="#000" stroke-width="1.2"/></svg></div><div class="tbody" style="top:163px;height:137px"><svg class="tic" style="top:10px" width="16" height="16" viewBox="0 0 16 16"><use href="#rename"/></svg><div class="ti" style="top:11px">Rename this file</div><svg class="tic" style="top:30px" width="16" height="16" viewBox="0 0 16 16"><use href="#move"/></svg><div class="ti" style="top:31px">Move this file</div><svg class="tic" style="top:50px" width="16" height="16" viewBox="0 0 16 16"><use href="#copy"/></svg><div class="ti" style="top:51px">Copy this file</div><svg class="tic" style="top:70px" width="16" height="16" viewBox="0 0 16 16"><use href="#globe"/></svg><div class="ti" style="top:71px">Publish this file to the Web</div><svg class="tic" style="top:90px" width="16" height="16" viewBox="0 0 16 16"><use href="#email"/></svg><div class="ti" style="top:91px">E-mail this file</div><svg class="tic" style="top:110px" width="16" height="16" viewBox="0 0 16 16"><use href="#del"/></svg><div class="ti" style="top:111px">Delete this file</div></div><div class="th" style="top:315px">Other Places<svg class="chev" width="7" height="8" viewBox="0 0 7 8"><path d="M0.5 3.5 L3.5 0.5 L6.5 3.5 M0.5 7.5 L3.5 4.5 L6.5 7.5" fill="none" stroke="#000" stroke-width="1.2"/></svg></div><div class="tbody" style="top:338px;height:97px"><svg class="tic" style="top:10px" width="16" height="16" viewBox="0 0 16 16"><use href="#fold"/></svg><div class="ti" style="top:11px">WINDOWS</div><svg class="tic" style="top:30px" width="16" height="16" viewBox="0 0 16 16"><use href="#mydocs"/></svg><div class="ti" style="top:31px">My Documents</div><svg class="tic" style="top:50px" width="16" height="16" viewBox="0 0 16 16"><use href="#mycomp"/></svg><div class="ti" style="top:51px">My Computer</div><svg class="tic" style="top:70px" width="16" height="16" viewBox="0 0 16 16"><use href="#netpl"/></svg><div class="ti" style="top:71px">My Network Places</div></div><div class="th" style="top:450px">Details<svg class="chev" width="7" height="8" viewBox="0 0 7 8"><path d="M0.5 0.5 L3.5 3.5 L6.5 0.5 M0.5 4.5 L3.5 7.5 L6.5 4.5" fill="none" stroke="#000" stroke-width="1.2"/></svg></div><div class="sorted"></div><div class="a" style="left:211px;top:1px;width:581px;height:17px;background:#EFEBDE;border-bottom:1px solid #736D63;box-shadow:inset 0 -1px 0 #ADAA9C,inset 0 1px 0 #fff"></div><div class="lh" style="left:211px;width:179px;">Name<svg class="a" style="left:41px;top:6px" width="8" height="5" viewBox="0 0 8 5"><path d="M0 4.5 L4 0.5 L8 4.5 Z" fill="#ADAA9C"/></svg></div><div class="row" style="top:18px;width:580px"><svg class="a" style="left:4px;top:0px" width="16" height="16" viewBox="0 0 16 16" ><use href="#dll"/></svg><span style="left:20px">qdvd.dll</span></div><div class="row" style="top:35px;width:580px"><svg class="a" style="left:4px;top:0px" width="16" height="16" viewBox="0 0 16 16" ><use href="#dll"/></svg><span style="left:20px">qedit.dll</span></div><div class="row" style="top:52px;width:580px"><svg class="a" style="left:4px;top:0px" width="16" height="16" viewBox="0 0 16 16" ><use href="#dll"/></svg><span style="left:20px">qedwipes.dll</span></div><div class="row" style="top:69px;width:580px"><svg class="a" style="filter:url(#tint);left:4px;top:0px" width="16" height="16" viewBox="0 0 16 16" ><use href="#lic"/></svg><span style="left:18px;top:0px;height:17px;line-height:20px;background:#EFEBDE;padding:0 11px 0 2px">QEST.LIC</span></div><div class="row" style="top:86px;width:580px"><svg class="a" style="left:4px;top:0px" width="16" height="16" viewBox="0 0 16 16" ><use href="#lic"/></svg><span style="left:20px">QLS.TLB</span></div><div class="row" style="top:103px;width:580px"><svg class="a" style="left:4px;top:0px" width="16" height="16" viewBox="0 0 16 16" ><use href="#lic"/></svg><span style="left:20px">qmgr.dll</span></div></div></div></div><div class="win" style="left:55px;top:367px;z-index:2"><div class="in"></div><div class="in2"></div><div class="w0"><div class="tb ina"><svg class="a" style="left:5px;top:3px" width="16" height="16" viewBox="0 0 16 16" ><use href="#foldo"/></svg><span style="letter-spacing:-0.6px">QEST Admin Console</span><div class="cb" style="left:740px"><svg class="a" style="left:3px;top:12px" width="6" height="2"><rect width="6" height="2" fill="#000"/></svg></div><div class="cb" style="left:756px"><svg class="a" style="left:2px;top:4px" width="10" height="10"><rect x="0.5" y="1" width="9" height="8.5" fill="none" stroke="#000"/><rect x="0" y="0" width="10" height="2" fill="#000"/></svg></div><div class="cb" style="left:774px"><svg class="a" style="left:3px;top:5px" width="8" height="8" viewBox="0 0 8 8"><path d="M0.5 0.5 L7.5 7.5 M7.5 0.5 L0.5 7.5" stroke="#000" stroke-width="2"/></svg></div></div><div class="hl" style="top:30px"></div><div class="a" style="left:4px;top:31px;width:2px;height:79px;border-left:1px solid #ADAA9C;border-right:1px solid #fff"></div><div class="a" style="left:794px;top:31px;width:2px;height:79px;border-left:1px solid #ADAA9C;border-right:1px solid #fff"></div><div class="menu ina-m"><span style="left:9px">File</span><span style="left:41px">Edit</span><span style="left:76px">View</span><span style="left:113px">Favorites</span><span style="left:174px">Tools</span><span style="left:215px">Help</span><div class="a" style="left:750px;top:0;width:2px;height:22px;border-left:1px solid #ADAA9C;border-right:1px solid #fff"></div><div class="a" style="left:752px;top:0;width:38px;height:22px;background:#fff"><svg class="a" style="left:9px;top:1px" width="22" height="20" viewBox="0 0 22 20" ><use href="#flag"/></svg></div></div><div class="hl" style="top:54px"></div><div class="tool"><svg class="a" style="left:5px;top:3px" width="24" height="24" viewBox="0 0 24 24" ><use href="#back"/></svg><span style="left:32px">Back</span><svg class="a" style="left:64px;top:14px" width="5" height="3"><path d="M0 0 H5 L2.5 3 Z" fill="#000"/></svg><svg class="a" style="left:77px;top:3px" width="24" height="24" viewBox="0 0 24 24" ><use href="#fwd"/></svg><svg class="a" style="left:109px;top:14px" width="5" height="3"><path d="M0 0 H5 L2.5 3 Z" fill="#ADAA9C"/></svg><svg class="a" style="left:124px;top:3px" width="22" height="24" viewBox="0 0 22 24" ><use href="#up"/></svg><div class="vsep" style="left:152px"></div><svg class="a" style="left:158px;top:3px" width="24" height="24" viewBox="0 0 24 24" ><use href="#search"/></svg><span style="left:186px">Search</span><svg class="a" style="left:231px;top:4px" width="24" height="22" viewBox="0 0 24 22" ><use href="#folders"/></svg><span style="left:258px">Folders</span><div class="vsep" style="left:304px"></div><svg class="a" style="left:312px;top:6px" width="23" height="19" viewBox="0 0 23 19" ><use href="#views"/></svg><svg class="a" style="left:338px;top:14px" width="5" height="3"><path d="M0 0 H5 L2.5 3 Z" fill="#000"/></svg></div><div class="hl" style="top:86px"></div><div class="addr"><span class="albl">Address</span><div class="abox" style="width:678px"><i></i><svg class="a" style="left:2px;top:1px" width="16" height="16" viewBox="0 0 16 16" ><use href="#fold"/></svg><span>D:\Program Files\Spectra QEST\QEST Admin Console</span><div class="dd"><svg class="a" style="left:3px;top:5px" width="7" height="4"><path d="M0 0 H7 L3.5 4 Z" fill="#000"/></svg></div></div><svg class="a" style="left:739px;top:2px" width="18" height="18" viewBox="0 0 18 18" ><use href="#go"/></svg><span class="a" style="left:762px;top:1px">Go</span></div><div class="a" style="left:4px;top:110px;width:792px;height:1px;background:#ADAA9C"></div><div class="cont"><div class="th" style="top:13px">File and Folder Tasks<svg class="chev" width="7" height="8" viewBox="0 0 7 8"><path d="M0.5 3.5 L3.5 0.5 L6.5 3.5 M0.5 7.5 L3.5 4.5 L6.5 7.5" fill="none" stroke="#000" stroke-width="1.2"/></svg></div><div class="tbody" style="top:36px;height:127px"><svg class="tic" style="top:10px" width="16" height="16" viewBox="0 0 16 16"><use href="#move"/></svg><div class="ti" style="top:11px">Move the selected items</div><svg class="tic" style="top:30px" width="16" height="16" viewBox="0 0 16 16"><use href="#copy"/></svg><div class="ti" style="top:31px">Copy the selected items</div><svg class="tic" style="top:50px" width="16" height="16" viewBox="0 0 16 16"><use href="#globe"/></svg><div class="ti" style="top:51px">Publish the selected items<br>to the Web</div><svg class="tic" style="top:80px" width="16" height="16" viewBox="0 0 16 16"><use href="#email"/></svg><div class="ti" style="top:81px">E-mail the selected items</div><svg class="tic" style="top:100px" width="16" height="16" viewBox="0 0 16 16"><use href="#del"/></svg><div class="ti" style="top:101px">Delete the selected items</div></div><div class="th" style="top:178px">Other Places<svg class="chev" width="7" height="8" viewBox="0 0 7 8"><path d="M0.5 3.5 L3.5 0.5 L6.5 3.5 M0.5 7.5 L3.5 4.5 L6.5 7.5" fill="none" stroke="#000" stroke-width="1.2"/></svg></div><div class="tbody" style="top:201px;height:97px"><svg class="tic" style="top:10px" width="16" height="16" viewBox="0 0 16 16"><use href="#fold"/></svg><div class="ti" style="top:11px">Spectra QEST</div><svg class="tic" style="top:30px" width="16" height="16" viewBox="0 0 16 16"><use href="#mydocs"/></svg><div class="ti" style="top:31px">My Documents</div><svg class="tic" style="top:50px" width="16" height="16" viewBox="0 0 16 16"><use href="#mycomp"/></svg><div class="ti" style="top:51px">My Computer</div><svg class="tic" style="top:70px" width="16" height="16" viewBox="0 0 16 16"><use href="#netpl"/></svg><div class="ti" style="top:71px">My Network Places</div></div><div class="th" style="top:313px">Details<svg class="chev" width="7" height="8" viewBox="0 0 7 8"><path d="M0.5 0.5 L3.5 3.5 L6.5 0.5 M0.5 4.5 L3.5 7.5 L6.5 4.5" fill="none" stroke="#000" stroke-width="1.2"/></svg></div><div class="sorted"></div><div class="a" style="left:211px;top:1px;width:581px;height:17px;background:#EFEBDE;border-bottom:1px solid #736D63;box-shadow:inset 0 -1px 0 #ADAA9C,inset 0 1px 0 #fff"></div><div class="lh" style="left:211px;width:179px;">Name<svg class="a" style="left:41px;top:6px" width="8" height="5" viewBox="0 0 8 5"><path d="M0 4.5 L4 0.5 L8 4.5 Z" fill="#ADAA9C"/></svg></div><div class="row" style="top:18px;width:580px"><svg class="a" style="filter:url(#tint);left:4px;top:0px" width="16" height="16" viewBox="0 0 16 16" ><use href="#exe"/></svg><span style="left:18px;top:0px;height:17px;line-height:20px;background:#EFEBDE;padding:0 11px 0 2px">QAC.exe</span></div><div class="row" style="top:35px;width:580px"><svg class="a" style="filter:url(#tint);left:4px;top:0px" width="16" height="16" viewBox="0 0 16 16" ><use href="#dll"/></svg><span style="left:18px;top:0px;height:17px;line-height:20px;background:#EFEBDE;padding:0 11px 0 2px">QACControls.ocx</span></div></div></div></div><div class="win" style="left:337px;top:30px;z-index:3"><div class="in"></div><div class="in2"></div><div class="w0"><div class="tb act"><svg class="a" style="left:5px;top:3px" width="16" height="16" viewBox="0 0 16 16" ><use href="#foldo"/></svg><span style="letter-spacing:0.03px">backup_2008-06-05</span><div class="cb" style="left:740px"><svg class="a" style="left:3px;top:12px" width="6" height="2"><rect width="6" height="2" fill="#000"/></svg></div><div class="cb" style="left:756px"><svg class="a" style="left:2px;top:4px" width="10" height="10"><rect x="0.5" y="1" width="9" height="8.5" fill="none" stroke="#000"/><rect x="0" y="0" width="10" height="2" fill="#000"/></svg></div><div class="cb" style="left:774px"><svg class="a" style="left:3px;top:5px" width="8" height="8" viewBox="0 0 8 8"><path d="M0.5 0.5 L7.5 7.5 M7.5 0.5 L0.5 7.5" stroke="#000" stroke-width="2"/></svg></div></div><div class="hl" style="top:30px"></div><div class="a" style="left:4px;top:31px;width:2px;height:79px;border-left:1px solid #ADAA9C;border-right:1px solid #fff"></div><div class="a" style="left:794px;top:31px;width:2px;height:79px;border-left:1px solid #ADAA9C;border-right:1px solid #fff"></div><div class="menu"><span style="left:9px">File</span><span style="left:41px">Edit</span><span style="left:76px">View</span><span style="left:113px">Favorites</span><span style="left:174px">Tools</span><span style="left:215px">Help</span><div class="a" style="left:750px;top:0;width:2px;height:22px;border-left:1px solid #ADAA9C;border-right:1px solid #fff"></div><div class="a" style="left:752px;top:0;width:38px;height:22px;background:#fff"><svg class="a" style="left:9px;top:1px" width="22" height="20" viewBox="0 0 22 20" ><use href="#flag"/></svg></div></div><div class="hl" style="top:54px"></div><div class="tool"><svg class="a" style="left:5px;top:3px" width="24" height="24" viewBox="0 0 24 24" ><use href="#back"/></svg><span style="left:32px">Back</span><svg class="a" style="left:64px;top:14px" width="5" height="3"><path d="M0 0 H5 L2.5 3 Z" fill="#000"/></svg><svg class="a" style="left:77px;top:3px" width="24" height="24" viewBox="0 0 24 24" ><use href="#fwd"/></svg><svg class="a" style="left:109px;top:14px" width="5" height="3"><path d="M0 0 H5 L2.5 3 Z" fill="#ADAA9C"/></svg><svg class="a" style="left:124px;top:3px" width="22" height="24" viewBox="0 0 22 24" ><use href="#up"/></svg><div class="vsep" style="left:152px"></div><svg class="a" style="left:158px;top:3px" width="24" height="24" viewBox="0 0 24 24" ><use href="#search"/></svg><span style="left:186px">Search</span><svg class="a" style="left:231px;top:4px" width="24" height="22" viewBox="0 0 24 22" ><use href="#folders"/></svg><span style="left:258px">Folders</span><div class="vsep" style="left:304px"></div><svg class="a" style="left:312px;top:6px" width="23" height="19" viewBox="0 0 23 19" ><use href="#views"/></svg><svg class="a" style="left:338px;top:14px" width="5" height="3"><path d="M0 0 H5 L2.5 3 Z" fill="#000"/></svg></div><div class="hl" style="top:86px"></div><div class="addr"><span class="albl">Address</span><div class="abox" style="width:678px"><i></i><svg class="a" style="left:2px;top:1px" width="16" height="16" viewBox="0 0 16 16" ><use href="#fold"/></svg><span>\\adld0009b\QEST\Install\backup_2008-06-05</span><div class="dd"><svg class="a" style="left:3px;top:5px" width="7" height="4"><path d="M0 0 H7 L3.5 4 Z" fill="#000"/></svg></div></div><svg class="a" style="left:739px;top:2px" width="18" height="18" viewBox="0 0 18 18" ><use href="#go"/></svg><span class="a" style="left:762px;top:1px">Go</span></div><div class="a" style="left:4px;top:110px;width:792px;height:1px;background:#ADAA9C"></div><div class="cont"><div class="th" style="top:13px">File and Folder Tasks<svg class="chev" width="7" height="8" viewBox="0 0 7 8"><path d="M0.5 3.5 L3.5 0.5 L6.5 3.5 M0.5 7.5 L3.5 4.5 L6.5 7.5" fill="none" stroke="#000" stroke-width="1.2"/></svg></div><div class="tbody" style="top:36px;height:67px"><svg class="tic" style="top:10px" width="16" height="16" viewBox="0 0 16 16"><use href="#newfold"/></svg><div class="ti" style="top:11px">Make a new folder</div><svg class="tic" style="top:30px" width="16" height="16" viewBox="0 0 16 16"><use href="#globe"/></svg><div class="ti" style="top:31px">Publish this folder to the<br>Web</div></div><div class="th" style="top:118px">Other Places<svg class="chev" width="7" height="8" viewBox="0 0 7 8"><path d="M0.5 3.5 L3.5 0.5 L6.5 3.5 M0.5 7.5 L3.5 4.5 L6.5 7.5" fill="none" stroke="#000" stroke-width="1.2"/></svg></div><div class="tbody" style="top:141px;height:97px"><svg class="tic" style="top:10px" width="16" height="16" viewBox="0 0 16 16"><use href="#fold"/></svg><div class="ti" style="top:11px">Install</div><svg class="tic" style="top:30px" width="16" height="16" viewBox="0 0 16 16"><use href="#mydocs"/></svg><div class="ti" style="top:31px">My Documents</div><svg class="tic" style="top:50px" width="16" height="16" viewBox="0 0 16 16"><use href="#mycomp"/></svg><div class="ti" style="top:51px">My Computer</div><svg class="tic" style="top:70px" width="16" height="16" viewBox="0 0 16 16"><use href="#netpl"/></svg><div class="ti" style="top:71px">My Network Places</div></div><div class="th" style="top:253px">Details<svg class="chev" width="7" height="8" viewBox="0 0 7 8"><path d="M0.5 0.5 L3.5 3.5 L6.5 0.5 M0.5 4.5 L3.5 7.5 L6.5 4.5" fill="none" stroke="#000" stroke-width="1.2"/></svg></div><div class="sorted"></div><div class="a" style="left:211px;top:1px;width:581px;height:17px;background:#EFEBDE;border-bottom:1px solid #736D63;box-shadow:inset 0 -1px 0 #ADAA9C,inset 0 1px 0 #fff"></div><div class="lh" style="left:211px;width:179px;">Name<svg class="a" style="left:41px;top:6px" width="8" height="5" viewBox="0 0 8 5"><path d="M0 4.5 L4 0.5 L8 4.5 Z" fill="#ADAA9C"/></svg></div><div class="lh" style="left:390px;width:96px;text-align:right;padding-right:6px;padding-left:0;">Size</div><div class="lh" style="left:486px;width:120px;">Type</div><div class="lh" style="left:606px;width:120px;">Date Modified</div><div class="row" style="top:18px;width:580px"><svg class="a" style="left:4px;top:0px" width="16" height="16" viewBox="0 0 16 16" ><use href="#dll"/></svg><span style="left:20px">QDICustom.dll</span><span style="left:180px;width:90px;text-align:right">916 KB</span><span style="left:281px">Application Extension</span><span style="left:400px;letter-spacing:0">30/04/2008 4:27 PM</span></div><div class="row" style="top:35px;width:580px"><svg class="a" style="left:4px;top:0px" width="16" height="16" viewBox="0 0 16 16" ><use href="#exe"/></svg><span style="left:20px">QDI.exe</span><span style="left:180px;width:90px;text-align:right">400 KB</span><span style="left:281px">Application</span><span style="left:400px;letter-spacing:0">30/04/2008 4:27 PM</span></div><div class="row" style="top:52px;width:580px"><svg class="a" style="left:4px;top:0px" width="16" height="16" viewBox="0 0 16 16" ><use href="#dll"/></svg><span style="left:20px">QACControls.ocx</span><span style="left:180px;width:90px;text-align:right">780 KB</span><span style="left:281px">ActiveX Control</span><span style="left:400px;letter-spacing:0">19/01/2007 2:38 PM</span></div><div class="row" style="top:69px;width:580px"><svg class="a" style="left:4px;top:0px" width="16" height="16" viewBox="0 0 16 16" ><use href="#exe"/></svg><span style="left:20px">QAC.exe</span><span style="left:180px;width:90px;text-align:right">2,048 KB</span><span style="left:281px">Application</span><span style="left:400px;letter-spacing:0">23/02/2006 5:01 PM</span></div><div class="row" style="top:86px;width:580px"><svg class="a" style="left:4px;top:0px" width="16" height="16" viewBox="0 0 16 16" ><use href="#lic"/></svg><span style="left:18px;top:0px;height:17px;line-height:18px;border:1px dotted #000;padding:0 5px 0 1px">QEST.LIC</span><span style="left:180px;width:90px;text-align:right">16 KB</span><span style="left:281px">LIC File</span><span style="left:400px;letter-spacing:0">29/05/2008 7:54 AM</span></div></div></div></div><div id="task"><div class="tkb" style="left:2px;width:53px;height:24px;font-weight:bold"><svg class="a" style="left:0px;top:1px" width="18" height="18" viewBox="0 0 18 18" ><use href="#sflag"/></svg><span style="left:19px;top:1px;letter-spacing:-0.76px">Start</span></div><svg class="a" style="left:63px;top:6px" width="17" height="17" viewBox="0 0 17 17" ><use href="#ie"/></svg><svg class="a" style="left:86px;top:6px" width="16" height="16" viewBox="0 0 16 16" ><use href="#ff"/></svg><svg class="a" style="left:108px;top:6px" width="16" height="16" viewBox="0 0 16 16" ><use href="#ql3"/></svg><div class="tkb on" style="left:133px;width:160px"><svg class="a" style="left:4px;top:3px" width="16" height="16" viewBox="0 0 16 16" ><use href="#foldo"/></svg><span>backup_2008-06-05</span></div><div class="tkb" style="left:296px;width:160px"><svg class="a" style="left:4px;top:3px" width="16" height="16" viewBox="0 0 16 16" ><use href="#foldo"/></svg><span>system32</span></div><div class="tkb" style="left:459px;width:160px"><svg class="a" style="left:4px;top:3px" width="16" height="16" viewBox="0 0 16 16" ><use href="#foldo"/></svg><span>QEST Admin Console</span></div><div id="tray"><svg class="a" style="left:2px;top:3px" width="16" height="16" viewBox="0 0 16 16" ><use href="#tr1"/></svg><svg class="a" style="left:21px;top:3px" width="16" height="16" viewBox="0 0 16 16" ><use href="#tr2"/></svg><svg class="a" style="left:38px;top:3px" width="16" height="16" viewBox="0 0 16 16" ><use href="#tr3"/></svg><svg class="a" style="left:57px;top:3px" width="16" height="16" viewBox="0 0 16 16" ><use href="#tr4"/></svg><span class="a" style="left:80px;top:4px;line-height:16px;letter-spacing:0px">11:36 AM</span></div></div></div>
</div>
</body></html>
